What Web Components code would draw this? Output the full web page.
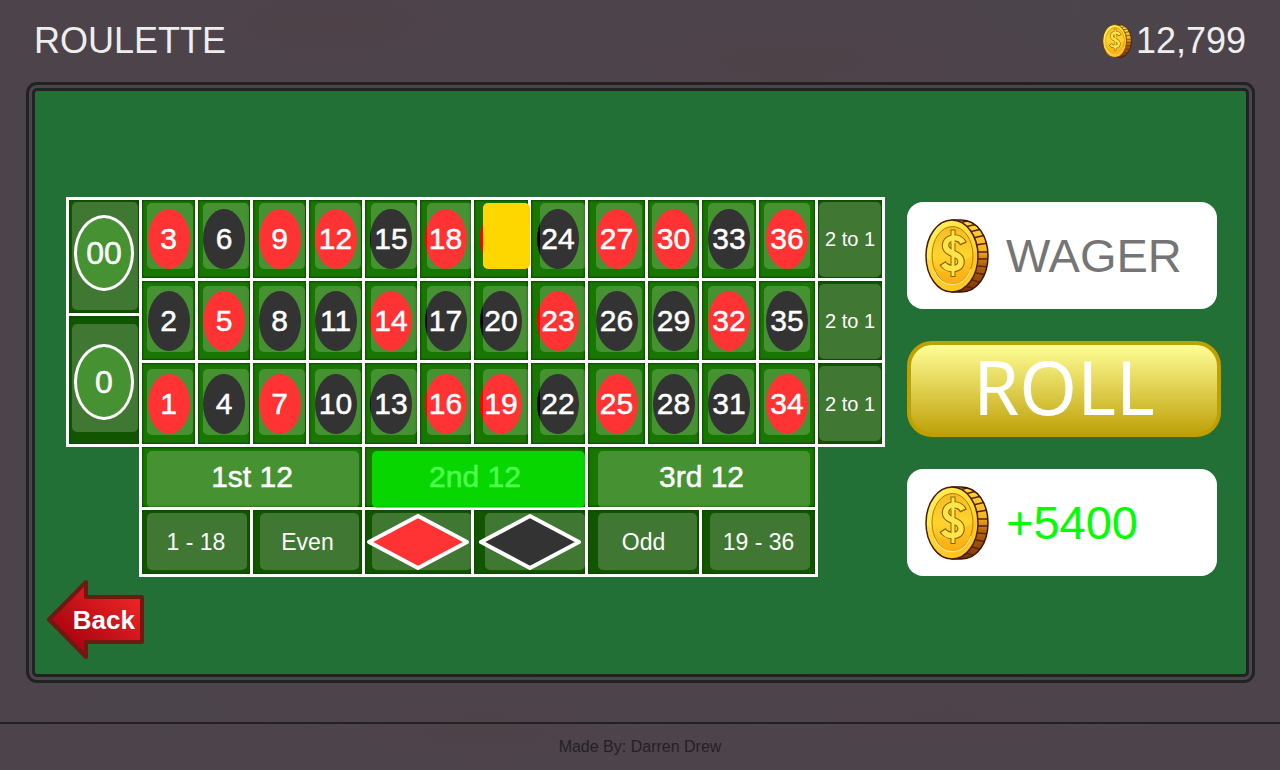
<!DOCTYPE html>
<html lang="en">
<head>
<meta charset="utf-8">
<title>Roulette</title>
<meta name="viewport" content="width=device-width, initial-scale=1">
<style>
  html, body { margin: 0; min-height: 100%; }
  body {
    font-family: "Liberation Sans", Arial, sans-serif;
    background: #4d444b;
  }
</style>
</head>
<body>
<casino-page></casino-page>

<script>
const define = (name, html, setup) => {
  const template = document.createElement('template');
  template.innerHTML = html;
  customElements.define(name, class extends HTMLElement {
    connectedCallback() {
      if (this.shadowRoot) return;
      this.attachShadow({ mode: 'open' }).append(template.content.cloneNode(true));
      if (setup) setup(this, this.shadowRoot);
    }
  });
};

/* Gold coin, sized by its host */
define('coin-icon', `
  <style>
    :host { display: block; flex: none; width: 64px; height: 74px; }
    svg { display: block; width: 100%; height: 100%; }
  </style>
  <svg viewBox="0 0 64 74" aria-hidden="true">
    <defs>
      <linearGradient id="rim" x1="0" y1="0" x2="1" y2="1">
        <stop offset="0" stop-color="#fff36a"/><stop offset=".5" stop-color="#ffe033"/><stop offset="1" stop-color="#fbc01c"/>
      </linearGradient>
      <linearGradient id="face" x1="0" y1="0" x2="0" y2="1">
        <stop offset="0" stop-color="#f6bb22"/><stop offset=".5" stop-color="#ffd42e"/><stop offset="1" stop-color="#fbb114"/>
      </linearGradient>
      <linearGradient id="edge" x1="0" y1="0" x2="0" y2="1">
        <stop offset="0" stop-color="#ffd93a"/><stop offset=".42" stop-color="#f6b422"/><stop offset=".6" stop-color="#b8650c"/><stop offset="1" stop-color="#7c3503"/>
      </linearGradient>
      <clipPath id="body"><path d="M27 1H36C53 1 63 18 63 37S53 73 36 73H27Z"/></clipPath>
    </defs>
    <path d="M27 1H36C53 1 63 18 63 37S53 73 36 73H27Z" fill="url(#edge)"/>
    <g clip-path="url(#body)" fill="none" stroke="#5a2408" stroke-width="1.4">
      <path d="M34 4L46 1M40 8L52 5M44 13L57 10M48 19L61 16M51 26L63 24M53 33H64M53 40H64M53 47L64 48M51 54L62 56M47 61L58 64M41 67L52 71"/>
    </g>
    <path d="M27 1H36C53 1 63 18 63 37S53 73 36 73H27Z" fill="none" stroke="#3b1208" stroke-width="1.500"/>
    <ellipse cx="27" cy="37" rx="26" ry="36" fill="url(#rim)" stroke="#4a1a0a" stroke-width="1.5"/>
    <ellipse cx="27.500" cy="36.500" rx="20.500" ry="29" fill="url(#face)" stroke="#b5760c" stroke-width="1"/>
    <path d="M9 52C16 69 38 72 46 50" fill="none" stroke="#fff3a8" stroke-width="1.200"/>
    <path d="M2 40C8 40 8 47 14 52S34 47 52 32C52 53 38 71 27 72C14 72 3 57 2 40Z" fill="#f59d06" opacity=".2"/>
    <g fill="none" stroke-linejoin="round">
      <path d="M28 10.500V20M28 46V58M28 24V46" stroke="#8f620c" stroke-width="5"/>
      <path d="M38.500 25C35 16.500 21 17 20.500 26.500C20.500 36 36.500 33 36 43C35.500 52 22 51 17.500 44" stroke="#8f620c" stroke-width="7.500"/>
      <path d="M28 11.500V57" stroke="#ffe548" stroke-width="3"/>
      <path d="M37.800 23.800C35 16.500 21 17 20.500 26.500C20.500 36 36.500 33 36 43C35.500 52 22 51 18.300 45" stroke="#ffe548" stroke-width="5.300"/>
    </g>
  </svg>
`);

/* One printed square of the table */
define('table-cell', `
  <style>
    :host {
      display: flex; align-items: center; justify-content: center; min-width: 0;
      background: #187700; color: #fff; white-space: nowrap;
      box-shadow: 0 0 0 3px #fff, inset 0 0 2px 1px #0d4a00;
      font: 30px/36px "Liberation Sans", Arial, sans-serif;
      -webkit-text-stroke: 0.5px #fff;
    }
    :host([tone="dark"]) { background: #115500; }
    :host([size="small"]) { font-size: 20px; -webkit-text-stroke-width: 0; }
    :host([size="medium"]) { font-size: 23px; -webkit-text-stroke-width: 0; }
    span { display: flex; align-items: center; justify-content: center; }
    :host([disc]) span { width: 42px; height: 60px; border-radius: 50%; }
    :host([disc="red"]) span { background: #f00; }
    :host([disc="black"]) span { background: #000; }
    :host([disc="green"]) span {
      box-sizing: border-box; width: 60px; height: 76px; background: #187700;
      border: 3px solid #fff; font-size: 32px;
    }
  </style>
  <span><slot></slot></span>
`);

define('bet-diamond', `
  <style>
    :host { display: block; width: 104px; height: 58px; color: #f00; }
    :host([suit="black"]) { color: #000; }
    svg { display: block; width: 100%; height: 100%; }
  </style>
  <svg viewBox="0 0 104 58" aria-hidden="true">
    <path d="M52 3L101 29L52 55L3 29Z" fill="currentColor" stroke="#fff" stroke-width="4" stroke-linejoin="round"/>
  </svg>
`);

/* Printed table with a layer of translucent bet buttons over it */
define('roulette-board', `
  <style>
    :host { display: grid; align-items: start; min-width: 0; }
    .print, .bets { grid-area: 1 / 1; min-width: 0; }
    .print {
      display: grid; gap: 3px; padding: 3px;
      grid-template-columns: 70fr 53fr 52fr 53fr 53fr 52fr 51fr 54fr 54fr 57fr 51fr 54fr 56fr 64fr;
      grid-template-rows: 78px 79px 81px 60px 64px;
    }
    .zeros { grid-area: 1 / 1 / 4 / 2; display: grid; gap: 3px; grid-template-rows: 113px 1fr; }
    .zeros table-cell { box-sizing: border-box; padding-bottom: 8px; }
    .zeros table-cell + table-cell { padding: 4px 0 0; }
    .r1 { grid-row: 1; } .r2 { grid-row: 2; } .r3 { grid-row: 3; }
    .dozen { grid-row: 4; grid-column: span 4; }
    .even { grid-row: 5; grid-column: span 2; }
    .d1 { grid-column: 2 / span 4; }
    .e1 { grid-column: 2 / span 2; }
    .bets {
      display: grid; column-gap: 9px; padding: 5px 4px 7px 6px;
      grid-template-columns: 66fr 662fr 62fr;
    }
    .side { display: grid; align-content: start; }
    .left { gap: 14px; grid-auto-rows: 108px; }
    .right { gap: 7px; grid-auto-rows: 75px; }
    .middle { display: flex; flex-direction: column; padding-top: 1px; }
    .numbers { display: grid; grid-template-columns: repeat(12, 1fr); grid-auto-rows: 66px; gap: 17px 10px; }
    .dozens, .evens { display: grid; grid-auto-rows: 57px; column-gap: 13px; }
    .dozens { grid-template-columns: repeat(3, 1fr); margin: 16px 0 5px; }
    .evens { grid-template-columns: repeat(6, 1fr); }
    button {
      appearance: none; border: 0; padding: 0; margin: 0; min-width: 0; cursor: pointer;
      border-radius: 5px; background: rgba(255, 255, 255, .2);
    }
    button.win { background: #ffd700; }
    button.hit { background: rgba(0, 255, 0, .7); }
  </style>
  <div class="print">
    <div class="zeros">
      <table-cell tone="dark" disc="green">00</table-cell>
      <table-cell tone="dark" disc="green">0</table-cell>
    </div>
  </div>
  <div class="bets">
    <div class="side left"></div>
    <div class="middle">
      <div class="numbers"></div>
      <div class="dozens"></div>
      <div class="evens"></div>
    </div>
    <div class="side right"></div>
  </div>
`, (host, root) => {
  const winner = 21;
  const reds = new Set([1, 3, 5, 7, 9, 12, 14, 16, 18, 19, 21, 23, 25, 27, 30, 32, 34, 36]);
  const print = root.querySelector('.print');
  const cell = (cls, attrs, html) => {
    const el = document.createElement('table-cell');
    el.className = cls;
    Object.entries(attrs).forEach(([k, v]) => el.setAttribute(k, v));
    el.innerHTML = html;
    print.append(el);
  };
  const bet = (where, label, cls = '') => {
    const b = document.createElement('button');
    b.type = 'button';
    b.className = cls;
    b.setAttribute('aria-label', label);
    root.querySelector(where).append(b);
  };
  bet('.left', '00');
  bet('.left', '0');
  for (let row = 1; row <= 3; row++) {
    for (let col = 0; col < 12; col++) {
      const n = col * 3 + 4 - row;
      cell('r' + row, { disc: reds.has(n) ? 'red' : 'black' }, n === winner ? '' : n);
      bet('.numbers', 'Number ' + n, n === winner ? 'win' : '');
    }
    cell('r' + row, { tone: 'dark', size: 'small' }, '2 to 1');
    bet('.right', 'Row ' + row + ', 2 to 1');
  }
  ['1st 12', '2nd 12', '3rd 12'].forEach((t, i) => {
    cell('dozen d' + (i + 1), {}, t);
    bet('.dozens', t, i === 1 ? 'hit' : '');
  });
  [['1 - 18', '1 - 18'], ['Even', 'Even'], ['Red', '<bet-diamond></bet-diamond>'],
   ['Black', '<bet-diamond suit="black"></bet-diamond>'], ['Odd', 'Odd'], ['19 - 36', '19 - 36']
  ].forEach(([label, html], i) => {
    cell('even e' + (i + 1), { tone: 'dark', size: 'medium' }, html);
    bet('.evens', label);
  });
});

define('coin-card', `
  <style>
    :host {
      display: flex; align-items: center; gap: 17px; box-sizing: border-box;
      height: 107px; padding: 0 18px; margin-right: 4px;
      border-radius: 16px; background: #fff;
      --value-font: 47px/56px "Liberation Sans", Arial, sans-serif;
    }
  </style>
  <coin-icon></coin-icon><slot></slot>
`);

define('bet-panel', `
  <style>
    :host { display: flex; flex-direction: column; gap: 32px; min-width: 0; padding-top: 5px; }
    input, output { flex: 1; min-width: 0; width: 0; font: var(--value-font); }
    input { border: 0; padding: 0; background: none; outline: 0; color: #333; }
    input::placeholder { color: #757575; opacity: 1; }
    output { color: #0f0; }
    button {
      height: 96px; padding: 0 0 4px; border: 4px solid #c0a000; border-radius: 25px;
      background: linear-gradient(#fffe96, #c0a20a);
      color: #fff; font: 74px/80px "Noto Sans", sans-serif; cursor: pointer;
    }
  </style>
  <coin-card><input type="text" inputmode="numeric" placeholder="WAGER" aria-label="Wager"></coin-card>
  <button type="button">ROLL</button>
  <coin-card><output>+5400</output></coin-card>
`);

define('back-button', `
  <style>
    :host { display: flex; }
    button {
      display: grid; align-items: center; width: 98px; height: 79px; padding: 0;
      border: 0; background: none; color: #fff; cursor: pointer;
      font: bold 26px/36px "Liberation Sans", Arial, sans-serif;
    }
    svg, span { grid-area: 1 / 1; }
    svg { display: block; width: 98px; height: 79px; }
    span { justify-self: end; padding-right: 10px; }
  </style>
  <button type="button">
    <svg viewBox="0 0 98 79" aria-hidden="true">
      <defs>
        <linearGradient id="red" x1="0" y1="1" x2="1" y2="0">
          <stop offset="0.200" stop-color="#a8040f"/><stop offset="1" stop-color="#fb2b2b"/>
        </linearGradient>
      </defs>
      <path d="M2 39.500L39 2V17H95V62H39V77Z" fill="url(#red)" stroke="#6c1a12" stroke-width="4" stroke-linejoin="round"/>
    </svg>
    <span><slot></slot></span>
  </button>
`);

define('page-header', `
  <style>
    :host {
      display: flex; justify-content: space-between; align-items: center; box-sizing: border-box;
      height: 82px; padding: 0 34px; color: #eee;
    }
    h1, .balance { margin: 0; font: 36px/40px "Liberation Sans", Arial, sans-serif; }
    .balance { display: flex; align-items: center; gap: 4px; }
    coin-icon { width: 30px; height: 34px; }
  </style>
  <h1><slot></slot></h1>
  <div class="balance"><coin-icon></coin-icon><slot name="balance"></slot></div>
`);

define('page-footer', `
  <style>
    :host {
      display: flex; align-items: center; justify-content: center; box-sizing: border-box;
      height: 48px; border-top: 2px solid #222; color: #222; font-size: 16px; line-height: 20px;
    }
  </style>
  <slot></slot>
`);

define('casino-page', `
  <style>
    :host {
      display: flex; flex-direction: column; min-height: 100vh;
      background:
        radial-gradient(ellipse 180px 60px at 26% 3%, rgba(82, 60, 68, .3), transparent),
        radial-gradient(ellipse 260px 60px at 62% 8%, rgba(82, 62, 68, .3), transparent),
        radial-gradient(ellipse 160px 80px at 84% 1%, rgba(74, 70, 78, .3), transparent),
        radial-gradient(ellipse 220px 60px at 38% 95%, rgba(82, 62, 70, .3), transparent),
        radial-gradient(ellipse 200px 70px at 12% 92%, rgba(74, 68, 76, .3), transparent),
        radial-gradient(ellipse 240px 60px at 74% 93%, rgba(82, 62, 70, .25), transparent),
        #4d444b;
    }
    main {
      margin: 0 25px 39px 26px; border: 9px double #222; border-radius: 11px;
      background: #237037 padding-box;
    }
    .play {
      display: grid; grid-template-columns: 819fr 314fr; gap: 22px;
      padding: 106px 25px 0 31px;
    }
    back-button { margin: 3px 0 15px 12px; }
    page-footer { margin-top: auto; }
  </style>
  <page-header>ROULETTE<span slot="balance">12,799</span></page-header>
  <main>
    <div class="play">
      <roulette-board></roulette-board>
      <bet-panel></bet-panel>
    </div>
    <back-button>Back</back-button>
  </main>
  <page-footer>Made By: Darren Drew</page-footer>
`);
</script>
</body>
</html>
